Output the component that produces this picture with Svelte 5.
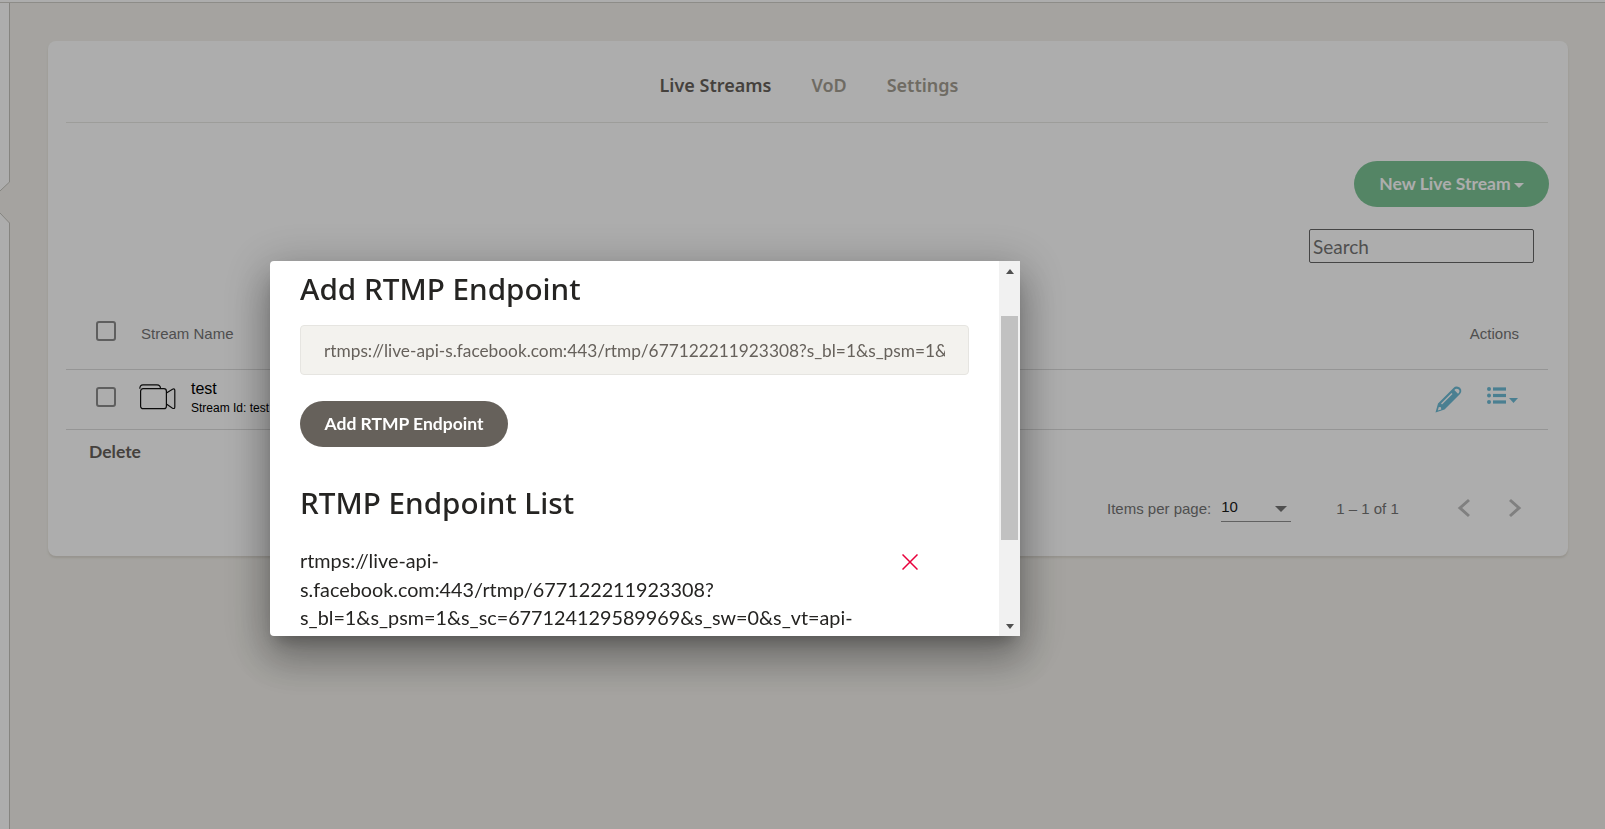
<script lang="ts">
  // Live stream list dimmed behind the "Add RTMP Endpoint" dialog.
  const tabs = [
    { label: 'Live Streams', active: true },
    { label: 'VoD', active: false },
    { label: 'Settings', active: false }
  ]
  const streamUrl =
    'rtmps://live-api-s.facebook.com:443/rtmp/677122211923308?s_bl=1&s_psm=1&s_sc=677124129589969&s_sw=0&s_vt=api-s&a=AbxN'
</script>

<div class="page">
  <div class="topbar"></div>
  <div class="body">
    <aside class="sidebar">
      <svg class="notch" width="11" height="44" viewBox="0 0 11 44">
        <path d="M9.5 0 L0 9 L0 31 L9.5 41 L11 41 L11 0 Z" fill="#f3f1ec" />
        <path d="M9.5 0 L0 9 M0 31 L9.5 41" stroke="#c4c3bd" fill="none" />
      </svg>
    </aside>
    <main class="main">
      <section class="card">
        <nav class="tabs">
          {#each tabs as t}
            <span class="tab" class:active={t.active}>{t.label}</span>
          {/each}
        </nav>

        <div class="toolbar">
          <button class="new-btn"><span>New Live Stream</span><i class="caret"></i></button>
          <input class="search" placeholder="Search" />
        </div>

        <div class="row head">
          <span class="check"></span>
          <span class="name-head">Stream Name</span>
          <span class="actions-head">Actions</span>
        </div>

        <div class="row item">
          <span class="check"></span>
          <svg class="cam" width="37" height="27" viewBox="0 0 37 27" fill="none" stroke="#111" stroke-width="1.2">
            <path d="M0.8 4.7 Q0.8 0.8 4 0.8 H18 Q21.5 0.8 21.5 4.7" />
            <rect x="1.6" y="4.7" width="25.8" height="20" rx="2.5" />
            <path d="M27.4 9 L33.5 5.2 Q35.8 4.2 35.8 6.5 V22.9 Q35.8 25.2 33.5 24.2 L27.4 20" />
          </svg>
          <div class="stream">
            <div class="stream-name">test</div>
            <div class="stream-id">Stream Id: test</div>
          </div>
          <div class="row-actions">
            <svg class="pencil" width="27" height="27" viewBox="0 0 27 27">
              <path
                fill="#6dbcd6"
                fill-rule="evenodd"
                d="M0.5 26.5 L3 17.5 L18.5 2 Q20.5 0 23 0.8 Q25.5 1.5 26.2 3.8 Q26.8 6 25 8 L9.5 23.5 Z M6 17.5 L16.5 7 L17.5 8 L7 18.5 Z M3.8 21 L2.8 24.4 L6.2 23.4 L6 21.2 Z M19.3 4 L23 7.7 L24 6.7 Q25 5 24 3.8 Q22.5 2.2 20.5 3 Z"
              />
            </svg>
            <svg class="list" width="32" height="20" viewBox="0 0 32 20" fill="#6dbcd6">
              <circle cx="2" cy="3" r="2" />
              <circle cx="2" cy="9.5" r="2" />
              <circle cx="2" cy="16" r="2" />
              <rect x="6" y="1.4" width="13" height="3.2" />
              <rect x="6" y="7.9" width="13" height="3.2" />
              <rect x="6" y="14.4" width="13" height="3.2" />
              <path d="M22 12 H31 L26.5 17 Z" />
            </svg>
          </div>
        </div>

        <div class="delete">Delete</div>

        <div class="pager">
          <span class="per-page">Items per page:</span>
          <div class="select"><span>10</span><i class="select-arrow"></i></div>
          <span class="range">1 – 1 of 1</span>
          <svg class="chev" width="14" height="20" viewBox="0 0 14 20" fill="none" stroke="#bdbdbd" stroke-width="3"><path d="M12 2 L3 10 L12 18" /></svg>
          <svg class="chev next" width="14" height="20" viewBox="0 0 14 20" fill="none" stroke="#bdbdbd" stroke-width="3"><path d="M2 2 L11 10 L2 18" /></svg>
        </div>
      </section>
    </main>
  </div>
</div>

<div class="backdrop"></div>

<div class="dialog">
  <div class="content">
    <h2 class="first">Add RTMP Endpoint</h2>
    <input class="url" value={streamUrl} readonly />
    <button class="add-btn">Add RTMP Endpoint</button>
    <h2 class="second">RTMP Endpoint List</h2>
    <div class="endpoint">
      <p>rtmps://live-api-<br />s.facebook.com:443/rtmp/677122211923308?<br />s_bl=1&amp;s_psm=1&amp;s_sc=677124129589969&amp;s_sw=0&amp;s_vt=api-</p>
      <svg class="remove" width="16" height="16" viewBox="0 0 16 16" stroke="#e8003c" stroke-width="1.5" fill="none"><path d="M0.5 0.5 L15.5 15.5 M15.5 0.5 L0.5 15.5" /></svg>
    </div>
  </div>
  <div class="scrollbar">
    <i class="up"></i>
    <div class="track"><div class="thumb"></div></div>
    <i class="down"></i>
  </div>
</div>

<style>
  :global(body) {
    background: #f3f1ec;
    overflow: hidden;
  }
  .page {
    height: 829px;
    display: flex;
    flex-direction: column;
    font-family: 'Liberation Sans', Arial, sans-serif;
  }
  .topbar {
    height: 2px;
    background: #fff;
    border-bottom: 1px solid #d0cfc9;
  }
  .body {
    flex: 1;
    display: flex;
  }
  .sidebar {
    position: relative;
    width: 9px;
    background: #fff;
    border-right: 1px solid #c4c3bd;
  }
  .notch {
    position: absolute;
    left: 0;
    top: 179px;
  }
  .main {
    flex: 1;
    padding: 38px 37px 0 38px;
  }
  .card {
    height: 515px;
    box-sizing: border-box;
    padding: 0 20px 0 18px;
    background: #fff;
    border-radius: 8px;
    box-shadow: 0 2px 2px rgba(204, 197, 185, 0.5);
  }
  .tabs {
    height: 82px;
    box-sizing: border-box;
    padding: 7px 0 0 4px;
    display: flex;
    justify-content: center;
    align-items: center;
    gap: 40px;
    border-bottom: 1px solid #e8e7e3;
    font-family: 'Noto Sans', sans-serif;
    font-weight: 600;
    font-size: 18px;
    color: #a49e93;
  }
  .tab.active {
    color: #66615b;
  }
  .toolbar {
    display: flex;
    flex-direction: column;
    align-items: flex-end;
    padding-top: 38px;
  }
  .new-btn {
    width: 195px;
    height: 46px;
    margin-right: -1px;
    border: 0;
    border-radius: 23px;
    background: #7dc496;
    color: #fff;
    font-family: Lato, sans-serif;
    font-weight: 700;
    font-size: 17.5px;
    padding: 0 0 2px;
  }
  .caret {
    display: inline-block;
    margin-left: 3px;
    vertical-align: middle;
    border-top: 5px solid #fff;
    border-left: 5px solid transparent;
    border-right: 5px solid transparent;
  }
  .search {
    margin: 22px 14px 0 0;
    width: 225px;
    height: 34px;
    box-sizing: border-box;
    border: 1px solid #666;
    border-radius: 2px;
    background: #fff;
    padding: 1px 3px;
    font-family: Lato, sans-serif;
    font-size: 19px;
  }
  .search::placeholder {
    color: #757575;
    opacity: 1;
  }
  .row {
    display: flex;
    align-items: center;
    border-bottom: 1px solid #dcdcdc;
  }
  .head {
    height: 58px;
    margin-top: 49px;
    box-sizing: border-box;
    padding: 0 29px 14px 30px;
    font-size: 15px;
    color: #757575;
  }
  .check {
    width: 20px;
    height: 20px;
    box-sizing: border-box;
    border: 2px solid #8c8c8c;
    border-radius: 3px;
    flex: none;
  }
  .head .check {
    margin-bottom: 6px;
  }
  .name-head {
    margin-left: 25px;
  }
  .actions-head {
    margin-left: auto;
  }
  .item {
    height: 60px;
    box-sizing: border-box;
    padding: 0 29px 5px 30px;
  }
  .cam {
    margin-left: 23px;
  }
  .stream {
    margin-left: 15px;
    color: #000;
  }
  .stream-name {
    font-size: 16px;
    line-height: 19px;
  }
  .stream-id {
    font-size: 12px;
    line-height: 15px;
    margin-top: 3px;
  }
  .row-actions {
    margin-left: auto;
    display: flex;
    align-items: flex-start;
    gap: 25px;
    padding-top: 5px;
  }
  .delete {
    margin: 12px 0 0 23px;
    font-family: Lato, sans-serif;
    font-weight: 700;
    font-size: 17.5px;
    line-height: 20px;
    color: #66615b;
  }
  .pager {
    display: flex;
    align-items: center;
    margin-top: 32px;
    padding-left: 1041px;
    font-size: 15px;
    color: #757575;
  }
  .select {
    display: flex;
    align-items: center;
    justify-content: space-between;
    box-sizing: border-box;
    width: 70px;
    height: 28px;
    margin-left: 10px;
    padding: 0 4px 3px 0;
    border-bottom: 1px solid #8f8f8f;
    font-size: 15px;
    color: #1a1a1a;
  }
  .select-arrow {
    margin-top: 6px;
    border-top: 6px solid #757575;
    border-left: 6px solid transparent;
    border-right: 6px solid transparent;
  }
  .range {
    margin-left: 45px;
    font-size: 15px;
  }
  .chev {
    margin-left: 58px;
  }
  .chev.next {
    margin-left: 37px;
  }

  .backdrop {
    position: fixed;
    inset: 0;
    background: rgba(0, 0, 0, 0.32);
  }
  .dialog {
    position: fixed;
    left: 270px;
    top: 261px;
    width: 750px;
    height: 375px;
    display: flex;
    background: #fff;
    border-radius: 4px 0 0 4px;
    overflow: hidden;
    box-shadow:
      0 11px 15px -7px rgba(0, 0, 0, 0.25),
      0 24px 38px 3px rgba(0, 0, 0, 0.2),
      0 9px 46px 8px rgba(0, 0, 0, 0.2);
  }
  .content {
    flex: 1;
    min-width: 0;
    padding: 0 30px;
    overflow: hidden;
  }
  h2 {
    margin: 0;
    font-family: 'Noto Sans', sans-serif;
    font-weight: 500;
    font-size: 29.7px;
    line-height: 36px;
    color: #252422;
  }
  .first {
    padding-top: 10px;
  }
  .url {
    display: block;
    width: 100%;
    height: 50px;
    margin-top: 18px;
    box-sizing: border-box;
    padding: 0 23px;
    background: #f3f2ee;
    border: 1px solid #e6e5e1;
    border-radius: 4px;
    font-family: Lato, sans-serif;
    font-size: 17.3px;
    color: #66615b;
  }
  .add-btn {
    display: block;
    width: 208px;
    height: 46px;
    margin-top: 26px;
    padding: 0 0 2px;
    border: 0;
    border-radius: 23px;
    background: #66615b;
    color: #fff;
    font-family: Lato, sans-serif;
    font-weight: 700;
    font-size: 17.5px;
  }
  .second {
    margin-top: 38px;
  }
  .endpoint {
    display: flex;
    align-items: flex-start;
    margin-top: 25px;
  }
  .endpoint p {
    margin: 0;
    width: 602px;
    font-family: Lato, sans-serif;
    font-size: 19.8px;
    line-height: 28.5px;
    color: #252422;
    white-space: nowrap;
  }
  .remove {
    margin-top: 8px;
    flex: none;
  }
  .scrollbar {
    flex: none;
    width: 21px;
    background: #f1f1f1;
    display: flex;
    flex-direction: column;
    align-items: center;
  }
  .up,
  .down {
    flex: none;
    width: 0;
    border-left: 4px solid transparent;
    border-right: 4px solid transparent;
  }
  .up {
    margin-top: 8px;
    border-bottom: 5px solid #505050;
  }
  .down {
    margin-bottom: 7px;
    border-top: 5px solid #505050;
  }
  .track {
    flex: 1;
    width: 100%;
    padding-top: 42px;
  }
  .thumb {
    height: 224px;
    margin: 0 2px;
    background: #c1c1c1;
  }
</style>
